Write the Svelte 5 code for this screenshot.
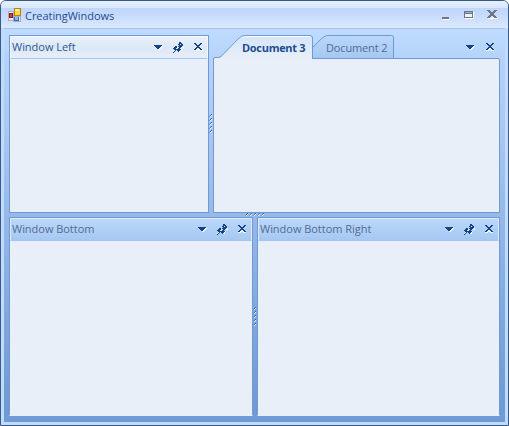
<script>
  const dots = [0, 1, 2, 3, 4];
</script>

{#snippet arrow()}
  <svg class="ico arrow" width="9" height="5" shape-rendering="crispEdges"><path fill="#eef6ff" d="M1 1h8v1h-1v1h-1v1h-1v1h-2v-1h-1v-1h-1v-1h-1z"/><path fill="#15428b" d="M0 0h8v1h-1v1h-1v1h-1v1h-2v-1h-1v-1h-1v-1h-1z"/></svg>
{/snippet}

{#snippet pin()}
  <svg class="ico pin" width="11" height="11" shape-rendering="crispEdges"><path fill="#eef6ff" d="M10 4h1v2h-2v2h-1v2h-2v-2h-3v1h-1v1h-1v1h-1v-2h1v-1h7z"/><path fill="#15428b" d="M6 0h2v1h1v1h1v2h-1v1h-1v1h-1v1h1v1h-1v1h-1v1h-1v-1h-1v-1h-1v1h-1v1h-1v1h-1v-1h1v-1h1v-1h-1v-1h-1v-1h1v-1h1v-1h2v1h1v-1h1v-1h-1v-1h1z"/><path fill="#dceafb" d="M7 2h1v1h-1zM5 5h1v1h-1zM4 5h1v1h-1zM3 6h2v1h-2z"/></svg>
{/snippet}

{#snippet cross()}
  <svg class="ico cross" width="9" height="9" shape-rendering="crispEdges"><path fill="#eef6ff" d="M0 7h2v-1h1v-1h2v1h1v1h2v1h-3v-1h-2v1h-3z"/><path fill="#15428b" d="M0 0h2v1h1v1h2v-1h1v-1h2v1h-1v1h-1v1h-1v1h1v1h1v1h1v1h-2v-1h-1v-1h-2v1h-1v1h-2v-1h1v-1h1v-1h1v-1h-1v-1h-1v-1h-1z"/></svg>
{/snippet}

{#snippet pane(title, active)}
  <section class="pane" class:active>
    <header><span class="caption">{title}</span>{@render arrow()}{@render pin()}{@render cross()}</header>
  </section>
{/snippet}

{#snippet grip(vertical)}
  <div class="split" class:vertical>
    {#each dots as d}
      <svg width="4" height="4" shape-rendering="crispEdges"><path fill="#fff" d="M1 2h1v1h-1zM2 1h1v1h-1z"/><path fill="#2863bd" d="M2 0h1v1h-1zM1 1h1v1h-1z"/><path fill="#5b95e4" d="M0 2h1v1h-1z"/></svg>
    {/each}
  </div>
{/snippet}

<main class="window">
  <div class="titlebar">
    <svg class="app" width="14" height="14" shape-rendering="crispEdges">
      <path fill="#e6edf8" stroke="#a7b1c5" d="M.5 3.500h5v9h-5zM5.500 8.500h7v5h-7z"/>
      <path fill="#8f1a14" d="M1 5h4v5h-4z"/><path fill="#d84338" d="M2 6h2v3h-2z"/>
      <path fill="#b98208" d="M6 0h7v8h-7z"/><path fill="#ffd54a" d="M7 1h5v6h-5z"/><path fill="#fff0a2" d="M7 1h4v2h-4z"/>
      <path fill="#3768c8" d="M6 9h5v4h-5z"/><path fill="#8db4f2" d="M7 9h3v3h-3z"/>
    </svg>
    <span class="name">CreatingWindows</span>
    <svg class="controls" width="56" height="10" shape-rendering="crispEdges">
      <path fill="#fff" d="M1 9h7v1h-7zM23 8h8v-6h1v7h-9zM46 8h4v-1h2v1h4v1h-10z"/>
      <path fill="#6d7788" d="M0 7h7v2h-7zM22 1h9v7h-9zM45 0h3v1h1v1h2v-1h1v-1h3v1h-1v1h-1v1h-1v2h1v1h1v1h1v1h-3v-1h-1v-1h-2v1h-1v1h-3v-1h1v-1h1v-1h1v-2h-1v-1h-1v-1h-1z"/>
      <path fill="#9aa7bd" d="M23 2h7v1h-7z"/><path fill="#e9f1fd" d="M23 4h7v3h-7z"/>
    </svg>
  </div>
  <div class="client">
    <div class="row top">
      {@render pane('Window Left', true)}
      {@render grip(true)}
      <section class="docs">
        <div class="strip">
          <svg class="tabs" width="182" height="24">
            <defs>
              <linearGradient id="on" x2="0" y2="1"><stop stop-color="#d5e5fa"/><stop offset="1" stop-color="#e8eff9"/></linearGradient>
              <linearGradient id="off" x2="0" y2="1"><stop stop-color="#bad7fc"/><stop offset="1" stop-color="#a5c8f0"/></linearGradient>
            </defs>
            <path fill="url(#off)" stroke="#6f9ad3" d="M99.500 12.500L109 3.200Q112 .5 115 .5H178.500Q180.500 .5 180.500 2.500V23.500H99.500Z"/>
            <path fill="url(#on)" d="M1 24V23H7L25 4Q28 .5 32 .5H97Q99.500 .5 99.500 3V24Z"/>
            <path fill="none" stroke="#fff" d="M29 2.500Q30 1.500 32 1.500H97.500"/>
            <path fill="none" stroke="#6f9ad3" d="M.5 24Q.5 22.500 2 22.500H5Q7 22.500 9 20.500L25 4Q28 .5 32 .5H97Q99.500 .5 99.500 3V24"/>
          </svg>
          <b class="tab">Document 3</b><span class="tab second">Document 2</span>
          {@render arrow()}{@render cross()}
        </div>
        <div class="docbody"></div>
      </section>
    </div>
    {@render grip(false)}
    <div class="row bottom">
      {@render pane('Window Bottom', false)}
      {@render grip(true)}
      {@render pane('Window Bottom Right', false)}
    </div>
  </div>
</main>

<style>
  :global(body) { background: #fff; }
  * { box-sizing: border-box; }
  svg { display: block; flex: none; }
  .window {
    width: 509px; height: 426px; overflow: hidden;
    display: flex; flex-direction: column;
    border: 1px solid #3b5a82; border-radius: 6px 6px 0 0;
    background: #bfdbff;
    font: 11px/14px "Open Sans", "Noto Sans", sans-serif; color: #1e4c91;
  }
  .titlebar {
    height: 28px; display: flex; align-items: flex-start; padding: 6px 10px 0 7px;
    background: linear-gradient(#e5effd 0, #d9e7fb 7px, #bfd6fb 7px, #c6dbfc 14px, #dce9fd 27px, #fff 27px);
  }
  .app { margin-top: 1px; }
  .name { margin: 2px auto 0 3px; letter-spacing: -.05px; }
  .controls { margin: 3px 0 0; }
  .client {
    flex: 1; margin: 0 3px 3px; padding: 6px 5px; display: flex; flex-direction: column;
    border-top: 1px solid #a4c5f4;
    background: linear-gradient(#bfdbff, #b5d3fa 30px, #a5c5f0 120px, #8fb3e4 220px, #6f9ad3 375px);
  }
  .row { display: flex; flex: none; }
  .top { height: 178px; }
  .bottom { height: 199px; }
  .pane { flex: none; width: 200px; background: #e8eff9; border: 1px solid #6f9ad3; }
  .bottom .pane { border-bottom-color: #e8eff9; }
  .bottom .pane:first-child { width: 244px; }
  .bottom .pane:last-child { width: 243px; }
  header {
    height: 23px; display: flex; align-items: flex-start;
    border: 1px solid #dceaff; border-bottom: 1px solid #a2c6fc;
    background: linear-gradient(#bad7fc, #a6c8f0); padding-right: 4px;
    color: #536b94;
  }
  .active header { background: linear-gradient(#e8f0fa, #dce8f7 50%, #e7eef8); border-color: #f4f8ff; border-bottom-color: #a2c6fc; color: #2d5795; }
  .caption { margin: 3px auto 0 1px; letter-spacing: -.03px; }
  .arrow { margin-top: 8px; }
  .pin { margin: 5px 0 0 10px; }
  .cross { margin: 6px 0 0 10px; }
  .split { display: flex; flex: none; justify-content: center; align-items: center; height: 4px; }
  .split.vertical { width: 4px; height: auto; flex-direction: column; }
  .docs { width: 287px; }
  .strip { height: 23px; display: flex; padding: 2px 5px 0 0; position: relative; }
  .tabs { position: absolute; left: 0; top: 0; }
  .tab { position: relative; margin: 4px 0 0 29px; width: 66px; white-space: nowrap; letter-spacing: -.3px; }
  .tab.second { margin: 4px auto 0 18px; color: #536b94; letter-spacing: -.15px; }
  .strip .arrow { margin-top: 8px; }
  .strip .cross { margin: 6px 0 0 11px; }
  .docbody { height: 155px; background: #e8eff9; border: 1px solid #6f9ad3; border-radius: 0 2px 0 0; }
</style>
